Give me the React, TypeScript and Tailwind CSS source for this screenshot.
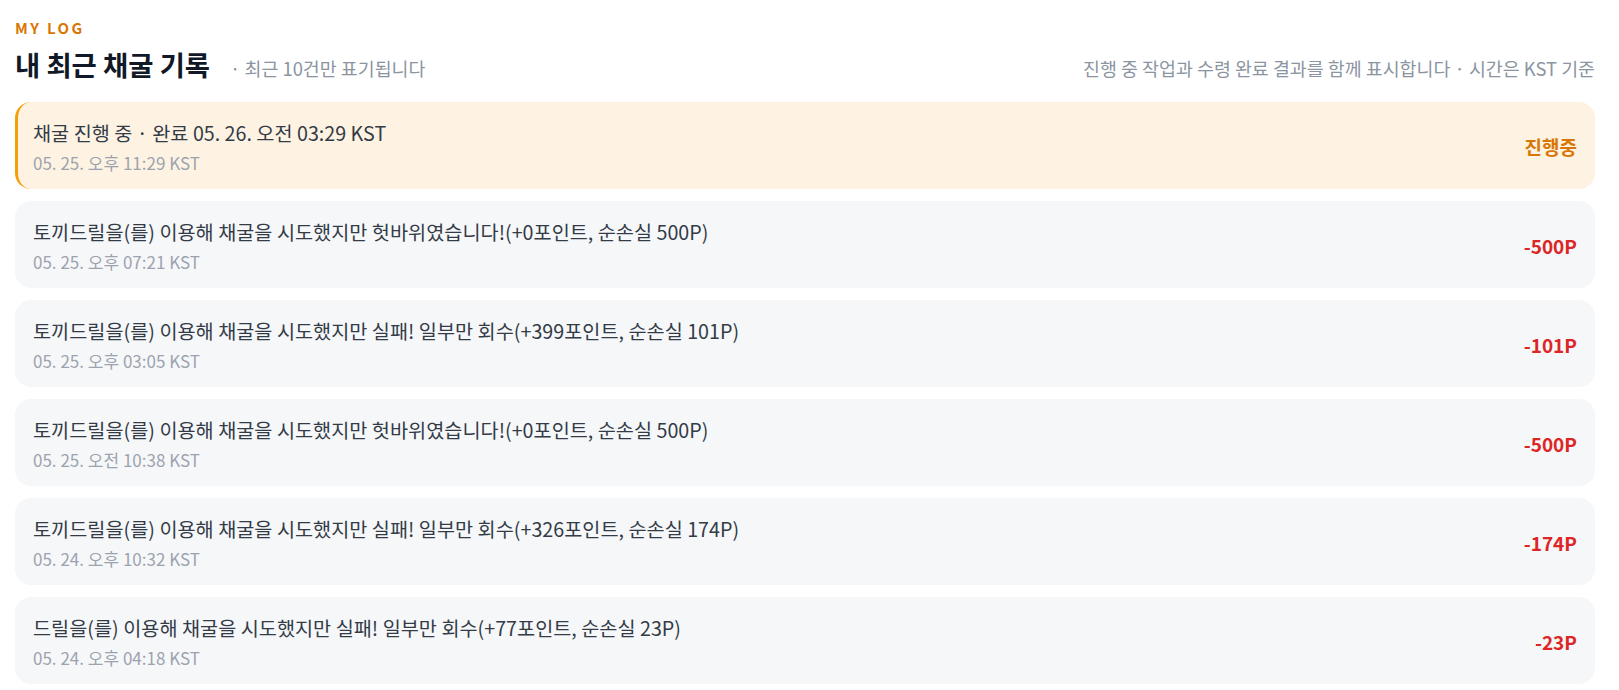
import React from "react";

type LogItem = {
  title: string;
  time: string;
  amount: string;
  active?: boolean;
};

const logs: LogItem[] = [
  { title: "채굴 진행 중 · 완료 05. 26. 오전 03:29 KST", time: "05. 25. 오후 11:29 KST", amount: "진행중", active: true },
  { title: "토끼드릴을(를) 이용해 채굴을 시도했지만 헛바위였습니다!(+0포인트, 순손실 500P)", time: "05. 25. 오후 07:21 KST", amount: "-500P" },
  { title: "토끼드릴을(를) 이용해 채굴을 시도했지만 실패! 일부만 회수(+399포인트, 순손실 101P)", time: "05. 25. 오후 03:05 KST", amount: "-101P" },
  { title: "토끼드릴을(를) 이용해 채굴을 시도했지만 헛바위였습니다!(+0포인트, 순손실 500P)", time: "05. 25. 오전 10:38 KST", amount: "-500P" },
  { title: "토끼드릴을(를) 이용해 채굴을 시도했지만 실패! 일부만 회수(+326포인트, 순손실 174P)", time: "05. 24. 오후 10:32 KST", amount: "-174P" },
  { title: "드릴을(를) 이용해 채굴을 시도했지만 실패! 일부만 회수(+77포인트, 순손실 23P)", time: "05. 24. 오후 04:18 KST", amount: "-23P" },
];

function LogRow({ item }: { item: LogItem }) {
  return (
    <li
      className={`flex justify-between rounded-2xl border-l-[3px] pl-[15px] pr-[18px] pt-[18px] pb-[15px] ${
        item.active ? "border-[#f59e0b] bg-[#fef3e2]" : "border-transparent bg-[#f6f7f9]"
      }`}
    >
      <div className="flex flex-col">
        <p className="text-[19.7px] leading-[26px] text-[#333b47]">{item.title}</p>
        <p className="mt-[6px] text-[17px] leading-[22px] text-[#9ca3af]">{item.time}</p>
      </div>
      <span
        className={`self-center text-[19px] font-bold ${item.active ? "text-[#d97706]" : "text-[#dc2626]"}`}
      >
        {item.amount}
      </span>
    </li>
  );
}

export default function App() {
  return (
    <div
      className="min-h-screen bg-white pl-[15px] pr-[24px] pt-[18px]"
      style={{ fontFamily: '"Noto Sans CJK KR", "Noto Sans", sans-serif' }}
    >
      <p className="text-[15px] font-bold leading-[20px] tracking-[0.16em] text-[#d97706]">MY LOG</p>
      <div className="mt-[9px] flex items-baseline justify-between">
        <div className="flex items-baseline">
          <h2 className="text-[27.4px] font-bold leading-[34px] text-[#111827]">내 최근 채굴 기록</h2>
          <span className="ml-[20px] text-[18.4px] leading-[24px] text-[#8b95a1]">· 최근 10건만 표기됩니다</span>
        </div>
        <span className="text-[18.4px] leading-[24px] text-[#8b95a1]">진행 중 작업과 수령 완료 결과를 함께 표시합니다 · 시간은 KST 기준</span>
      </div>
      <ul className="mt-[21px] flex flex-col gap-[12px]">
        {logs.map((item, i) => (
          <LogRow key={i} item={item} />
        ))}
      </ul>
    </div>
  );
}
